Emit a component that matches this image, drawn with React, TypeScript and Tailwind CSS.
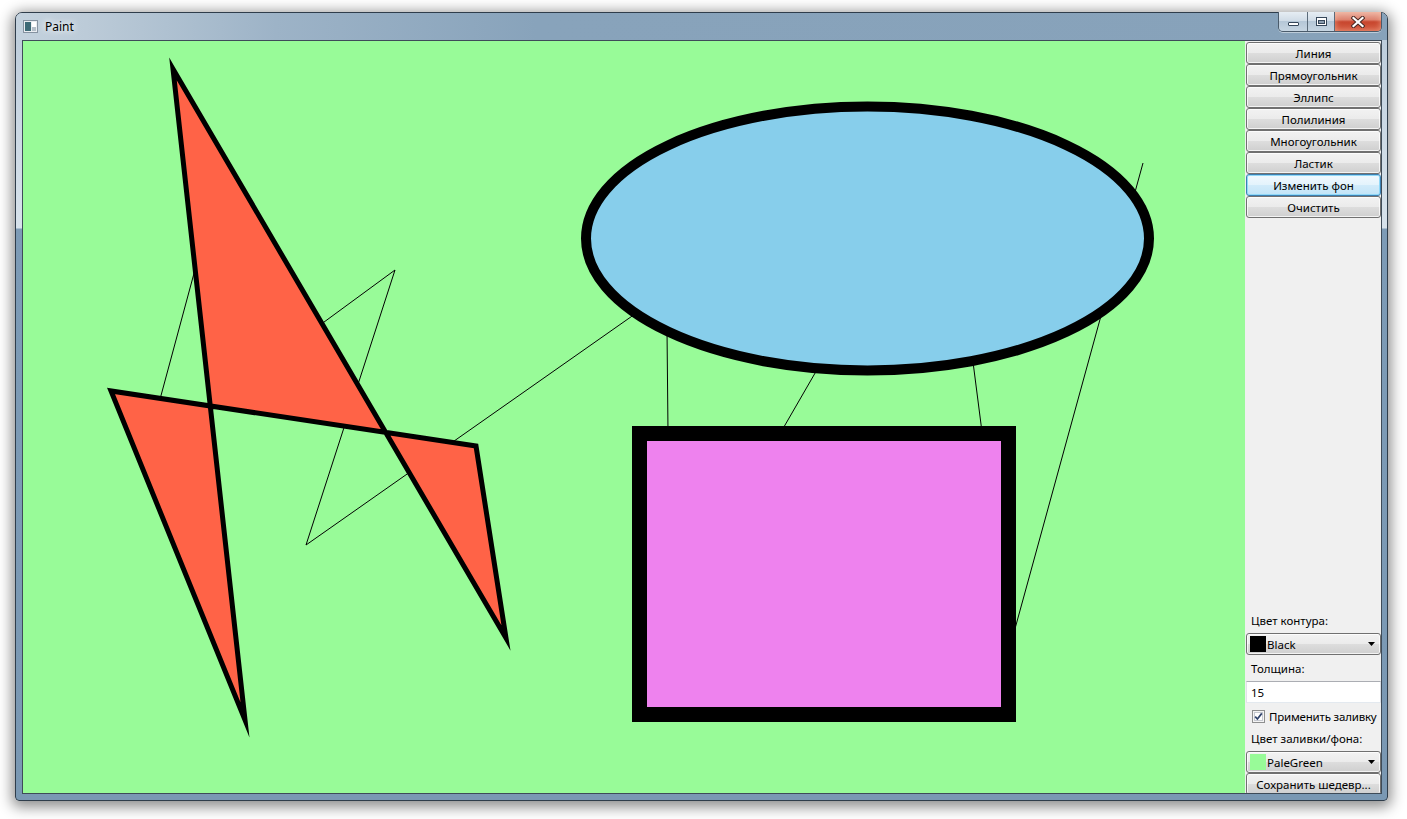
import React from "react";

const tools = [
  "Линия",
  "Прямоугольник",
  "Эллипс",
  "Полилиния",
  "Многоугольник",
  "Ластик",
  "Изменить фон",
  "Очистить",
];

const btnNormal =
  "border-[#707070] bg-[linear-gradient(180deg,#f2f2f2_0%,#ebebeb_50%,#dddddd_51%,#cfcfcf_100%)] shadow-[inset_0_0_0_1px_rgba(255,255,255,0.75)]";
const btnFocus =
  "border-[#3c7fb1] bg-[linear-gradient(180deg,#f1f9fe_0%,#e3f3fc_50%,#d1ebfa_51%,#c2e4f7_100%)] shadow-[inset_0_0_0_1px_#8fd8f8]";

const ToolButton = ({ label, focused }: { label: string; focused?: boolean }) => (
  <div
    className={`flex h-[22px] shrink-0 items-center justify-center whitespace-nowrap rounded-[3px] border pt-[1px] text-[11.5px] leading-none text-black ${
      focused ? btnFocus : btnNormal
    }`}
  >
    {label}
  </div>
);

const ColorCombo = ({ swatch, label }: { swatch: string; label: string }) => (
  <div
    className={`flex h-[22px] shrink-0 items-center rounded-[3px] border pl-[3px] pr-[5px] text-[11.5px] leading-none text-black ${btnNormal}`}
  >
    <span className={`h-[16px] w-[16px] ${swatch}`} />
    <span className="ml-[1px] pt-[1px]">{label}</span>
    <svg className="ml-auto" width="7" height="4" viewBox="0 0 7 4">
      <path d="M0 0h7L3.5 4z" fill="#000" />
    </svg>
  </div>
);

const PanelLabel = ({ text }: { text: string }) => (
  <div className="flex h-[26px] shrink-0 items-center whitespace-nowrap pl-[5px] pt-[2px] text-[11.5px] leading-none text-black">
    {text}
  </div>
);

const Canvas = () => (
  <div className="h-full w-[1222px] shrink-0 overflow-hidden bg-[#98fb98]">
    <svg width="1222" height="752" viewBox="23 41 1222 752" className="block">
      {/* thin lines under the shapes */}
      <g stroke="#000" strokeWidth="1" fill="none">
        <line x1="149" y1="440" x2="203" y2="240" />
        <polyline points="290,347 395,270 306,545 645,307" />
        <line x1="667" y1="330" x2="668" y2="432" />
        <line x1="818" y1="368" x2="781" y2="432" />
        <line x1="973" y1="362" x2="982" y2="432" />
        <line x1="1143" y1="163" x2="1013" y2="636" />
      </g>
      <polygon
        points="173,69 506,638 476,446 111,391 245,720"
        fill="#ff6347"
        fillRule="evenodd"
        stroke="#000"
        strokeWidth="5"
        strokeMiterlimit="10"
      />
      <ellipse cx="867.5" cy="238.5" rx="281.5" ry="132" fill="#87ceeb" stroke="#000" strokeWidth="10" />
      <rect x="639.5" y="433.5" width="369" height="281" fill="#ee82ee" stroke="#000" strokeWidth="15" />
    </svg>
  </div>
);

const SidePanel = () => (
  <div className="flex h-full w-[136px] shrink-0 flex-col overflow-hidden bg-[#f0f0f0] pl-[1px] pt-[1px]">
    {tools.map((t) => (
      <ToolButton key={t} label={t} focused={t === "Изменить фон"} />
    ))}
    <div className="flex-1" />
    <div className="-mb-[2px] flex flex-col">
      <PanelLabel text="Цвет контура:" />
      <ColorCombo swatch="bg-black" label="Black" />
      <PanelLabel text="Толщина:" />
      <div className="flex h-[22px] shrink-0 items-center border border-[#abadb3] border-b-[#e3e9ef] border-l-[#e2e3ea] border-r-[#dbdfe6] bg-white pl-[4px] pt-[1px] text-[11.5px] leading-none text-black">
        15
      </div>
      <div className="flex h-[22px] shrink-0 items-center whitespace-nowrap pl-[6px] pt-[5px] text-[11.5px] leading-none text-black">
        <svg width="13" height="13" viewBox="0 0 13 13" className="shrink-0">
          <rect x="0.5" y="0.5" width="12" height="12" fill="#f4f4f4" stroke="#8e8f8f" />
          <rect x="2.5" y="2.5" width="8" height="8" fill="#fff" stroke="#c6c9d0" />
          <path d="M3.2 6.6l2.2 2.4 4.4-5.6" fill="none" stroke="#31446c" strokeWidth="1.7" />
        </svg>
        <span className="ml-[4px] tracking-[-0.2px]">Применить заливку</span>
      </div>
      <PanelLabel text="Цвет заливки/фона:" />
      <ColorCombo swatch="bg-[#98fb98]" label="PaleGreen" />
      <ToolButton label="Сохранить шедевр..." />
    </div>
  </div>
);

const CaptionButtons = () => (
  <div className="-mt-px mr-[5px] flex h-[20px] overflow-hidden rounded-b-[5px] border border-t-0 border-[#4a5b6b] shadow-[0_1px_0_rgba(255,255,255,0.45)]">
    <div className="flex w-[29px] items-end justify-center border-r border-[#5b6b7a] bg-[linear-gradient(180deg,#e6edf3_0%,#d0dce7_45%,#b5c7d7_50%,#c6d5e2_100%)] pb-[5px]">
      <div className="h-[4px] w-[11px] rounded-[1px] border border-[#36475a] bg-white" />
    </div>
    <div className="flex w-[27px] items-center justify-center border-r border-[#5b6b7a] bg-[linear-gradient(180deg,#e6edf3_0%,#d0dce7_45%,#b5c7d7_50%,#c6d5e2_100%)]">
      <svg width="11" height="9" viewBox="0 0 11 9">
        <rect x="0.5" y="0.5" width="10" height="8" fill="#fff" stroke="#36475a" />
        <rect x="2.5" y="3.5" width="6" height="3" fill="#8c9daf" stroke="#36475a" />
      </svg>
    </div>
    <div className="flex w-[46px] items-center justify-center bg-[linear-gradient(180deg,#eab0a2_0%,#de8470_40%,#c8472f_52%,#d35a40_100%)] shadow-[inset_0_0_6px_rgba(255,200,170,0.6)]">
      <svg width="14" height="12" viewBox="0 0 14 12">
        <path d="M2.5 2l9 8M11.5 2l-9 8" stroke="#4a2a24" strokeWidth="4.2" strokeLinecap="square" />
        <path d="M2.5 2l9 8M11.5 2l-9 8" stroke="#fff" strokeWidth="2.2" strokeLinecap="square" />
      </svg>
    </div>
  </div>
);

const App = () => (
  <div className="min-h-screen bg-white pl-[15px] pt-[12px] font-['Noto_Sans',sans-serif]">
    <div className="flex h-[789px] w-[1373px] flex-col rounded-t-[7px] rounded-b-[4px] border border-[#2f3d4b] bg-[linear-gradient(180deg,#b9c9d8_0px,#cad7e3_100px,#d7e2eb_215px,#7d9bb6_216px,#7a98b3_100%)] shadow-[0_3px_14px_3px_rgba(0,0,0,0.45)]">
      <div className="flex h-[27px] shrink-0 items-start rounded-t-[6px] bg-[linear-gradient(90deg,#c4d2de_0px,#bccbd8_70px,#9db3c7_260px,#88a3bb_520px,#87a2ba_100%)]">
        <div className="flex h-[27px] items-center pl-[7px]">
          <svg width="15" height="13" viewBox="0 0 15 13">
            <rect x="0.5" y="0.5" width="14" height="12" fill="#e9edf1" stroke="#8592a0" />
            <rect x="2" y="2" width="6" height="9" fill="#3d6a76" />
            <rect x="9" y="2" width="4" height="5" fill="#ffffff" />
            <rect x="9" y="7" width="4" height="4" fill="#b4bec8" />
          </svg>
          <span className="ml-[7px] text-[12px] leading-none text-black [text-shadow:0_0_6px_#ffffff,0_0_10px_#ffffff]">
            Paint
          </span>
        </div>
        <div className="flex-1" />
        <CaptionButtons />
      </div>
      <div className="ml-[6px] mr-[5px] flex h-[754px] shrink-0 overflow-hidden border border-[#3e4b58]">
        <Canvas />
        <SidePanel />
      </div>
    </div>
  </div>
);

export default App;
